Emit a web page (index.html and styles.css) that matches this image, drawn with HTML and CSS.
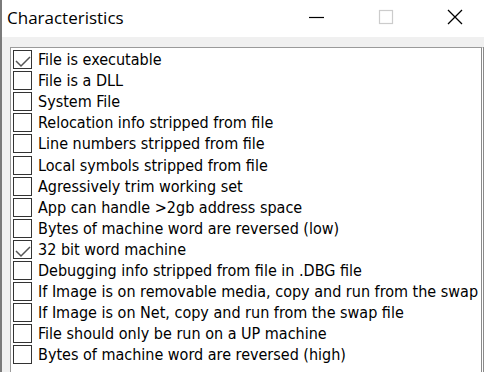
FILE: index.html
```html
<!DOCTYPE html>
<html>
<head>
<meta charset="utf-8">
<link rel="stylesheet" href="styles.css">
</head>
<body>
<div class="window">
  <div class="titlebar">
    <span class="title">Characteristics</span>
    <div class="controls">
      <span class="ctl"><svg width="16" height="16" viewBox="0 0 16 16"><path d="M0 8.5H15" stroke="#000" stroke-width="1.2"/></svg></span>
      <span class="ctl"><svg width="16" height="16" viewBox="0 0 16 16"><rect x="1.5" y="1.5" width="13" height="13" fill="none" stroke="#ccc" stroke-width="1.2"/></svg></span>
      <span class="ctl"><svg width="16" height="16" viewBox="0 0 16 16"><path d="M1 1L15 15M15 1L1 15" stroke="#000" stroke-width="1.3"/></svg></span>
    </div>
  </div>
  <div class="client">
    <div class="listbox">
      <div class="item"><span class="box"><svg class="check" width="17" height="17" viewBox="0 0 17 17"><path d="M2 10L7 15L16 6" fill="none" stroke="#555" stroke-width="1.5"/></svg></span><span>File is executable</span></div>
      <div class="item"><span class="box"></span><span>File is a DLL</span></div>
      <div class="item"><span class="box"></span><span>System File</span></div>
      <div class="item"><span class="box"></span><span>Relocation info stripped from file</span></div>
      <div class="item"><span class="box"></span><span>Line numbers stripped from file</span></div>
      <div class="item"><span class="box"></span><span>Local symbols stripped from file</span></div>
      <div class="item"><span class="box"></span><span>Agressively trim working set</span></div>
      <div class="item"><span class="box"></span><span>App can handle &gt;2gb address space</span></div>
      <div class="item"><span class="box"></span><span>Bytes of machine word are reversed (low)</span></div>
      <div class="item"><span class="box"><svg class="check" width="17" height="17" viewBox="0 0 17 17"><path d="M2 10L7 15L16 6" fill="none" stroke="#555" stroke-width="1.5"/></svg></span><span>32 bit word machine</span></div>
      <div class="item"><span class="box"></span><span>Debugging info stripped from file in .DBG file</span></div>
      <div class="item"><span class="box"></span><span>If Image is on removable media, copy and run from the swap file</span></div>
      <div class="item"><span class="box"></span><span>If Image is on Net, copy and run from the swap file</span></div>
      <div class="item"><span class="box"></span><span>File should only be run on a UP machine</span></div>
      <div class="item"><span class="box"></span><span>Bytes of machine word are reversed (high)</span></div>
    </div>
  </div>
</div>
</body>
</html>
```

FILE: styles.css
```css
html, body {
  margin: 0;
  padding: 0;
  width: 484px;
  height: 372px;
  overflow: hidden;
  background: #fff;
}
.window {
  height: 372px;
  border-left: 2px solid #7a7a7a;
  box-sizing: border-box;
  display: flex;
  flex-direction: column;
  overflow: hidden;
}
.titlebar {
  height: 37px;
  flex: none;
  display: flex;
  align-items: center;
  justify-content: space-between;
  background: #fff;
}
.title {
  font-family: "Open Sans", sans-serif;
  font-size: 17px;
  color: #000;
  padding-left: 5px;
  margin-top: -3px;
}
.controls {
  display: flex;
  margin-top: -4px;
  margin-right: -5px;
}
.ctl {
  width: 69px;
  display: flex;
  justify-content: center;
}
.client {
  flex: 1;
  background: #f0f0f0;
  padding: 10px 0 0 8px;
  overflow: hidden;
}
.listbox {
  background: #fff;
  border: 1px solid #9a9a9a;
  border-right: 3px double #8a8a8a;
  height: 400px;
  padding: 1px 0 0 2px;
  overflow: hidden;
}
.item {
  height: 21.1px;
  display: flex;
  align-items: center;
  white-space: nowrap;
  font-family: "DejaVu Sans Condensed", "DejaVu Sans", sans-serif;
  font-size: 16px;
  color: #000;
}
.box {
  width: 17px;
  height: 17px;
  border: 1.5px solid #333;
  margin: 0 6px 0 0;
  flex: none;
  background: #fff;
  display: flex;
}
.check {
  display: block;
}
```
